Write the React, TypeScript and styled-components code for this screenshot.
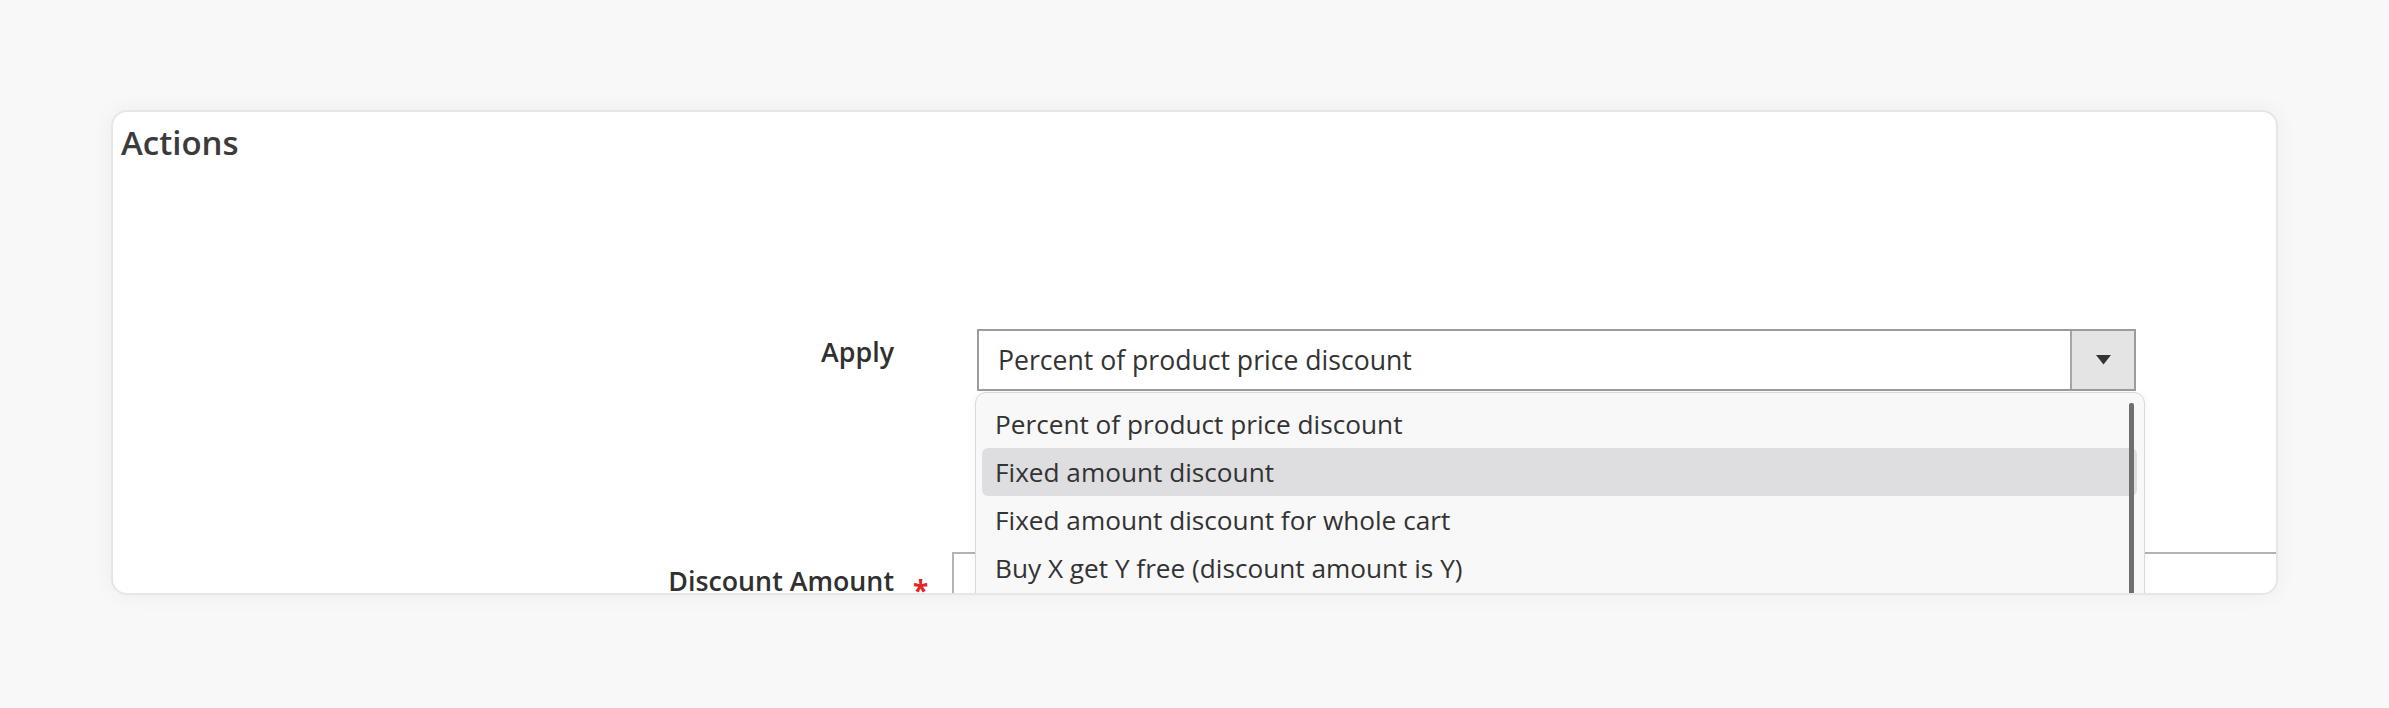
import React from "react";
import styled, { createGlobalStyle } from "styled-components";

const GlobalStyle = createGlobalStyle`
  html, body {
    margin: 0;
    padding: 0;
    background: #f8f8f8;
  }
  body {
    font-family: "Open Sans", "Noto Sans", sans-serif;
    color: #333333;
  }
`;

const Page = styled.div`
  width: 2389px;
  height: 708px;
  padding: 110px 0 0 111px;
  box-sizing: border-box;
`;

const Card = styled.section`
  position: relative;
  width: 2167px;
  height: 485px;
  box-sizing: border-box;
  background: #ffffff;
  border: 2px solid #e6e6e6;
  border-radius: 16px;
  box-shadow: 0 0 22px rgba(0, 0, 0, 0.05);
  overflow: hidden;
`;

const Title = styled.h2`
  margin: 0;
  padding: 13px 0 0 8px;
  font-size: 33px;
  line-height: 36px;
  font-weight: 600;
  color: #3b3b3b;
`;

const Form = styled.div`
  display: flex;
  flex-direction: column;
  padding-top: 168px;
`;

const Field = styled.div<{ $gap?: number }>`
  display: flex;
  align-items: flex-start;
  margin-top: ${(p) => p.$gap ?? 0}px;
`;

const Label = styled.label<{ $top: number }>`
  flex: 0 0 781px;
  padding-top: ${(p) => p.$top}px;
  text-align: right;
  font-size: 26.8px;
  line-height: 32px;
  font-weight: 600;
  color: #303030;
`;

const Marker = styled.span`
  flex: 0 0 58px;
  box-sizing: border-box;
  padding: 22px 0 0 19px;
  font-size: 28px;
  line-height: 32px;
  font-weight: 700;
  color: #e22626;
`;

const SelectWrap = styled.div`
  position: relative;
  margin-left: 83px;
`;

const SelectBox = styled.div`
  display: flex;
  width: 1159px;
  height: 62px;
  box-sizing: border-box;
  border: 2px solid #9c9c9c;
  background: #ffffff;
`;

const SelectValue = styled.span`
  flex: 1;
  padding-left: 19px;
  font-size: 26.6px;
  line-height: 58px;
  color: #333333;
  white-space: nowrap;
`;

const ArrowButton = styled.span`
  flex: 0 0 62px;
  display: flex;
  align-items: center;
  justify-content: center;
  background: #e4e4e4;
  border-left: 2px solid #a6a6a6;
`;

const Dropdown = styled.ul`
  position: absolute;
  top: 63px;
  left: -2px;
  width: 1170px;
  height: 260px;
  margin: 0;
  padding: 7px 7px 0 6px;
  box-sizing: border-box;
  list-style: none;
  background: #f8f8f8;
  border: 1px solid #d9d9d9;
  border-radius: 11px;
  box-shadow: 0 2px 8px rgba(0, 0, 0, 0.06);
`;

const Option = styled.li<{ $active?: boolean }>`
  height: 48px;
  padding-left: 13px;
  border-radius: 6px;
  font-size: 26.2px;
  line-height: 48px;
  color: #333333;
  white-space: nowrap;
  background: ${(p) => (p.$active ? "#dedde0" : "transparent")};
`;

const ScrollThumb = styled.span`
  position: absolute;
  top: 10px;
  right: 10px;
  width: 5px;
  height: 240px;
  border-radius: 2px;
  background: #6f6f6f;
`;

const Input = styled.div`
  flex: 1;
  height: 80px;
  box-sizing: border-box;
  border: 2px solid #b3b3b3;
  border-right: none;
  background: #ffffff;
`;

const options = [
  "Percent of product price discount",
  "Fixed amount discount",
  "Fixed amount discount for whole cart",
  "Buy X get Y free (discount amount is Y)",
];

export default function App() {
  return (
    <>
      <GlobalStyle />
      <Page>
        <Card>
          <Title>Actions</Title>
          <Form>
            <Field>
              <Label $top={7}>Apply</Label>
              <SelectWrap>
                <SelectBox>
                  <SelectValue>Percent of product price discount</SelectValue>
                  <ArrowButton>
                    <svg width="15" height="10" viewBox="0 0 15 10">
                      <path d="M0 0 H15 L7.5 9.5 Z" fill="#333333" />
                    </svg>
                  </ArrowButton>
                </SelectBox>
                <Dropdown>
                  {options.map((o, i) => (
                    <Option key={o} $active={i === 1}>
                      {o}
                    </Option>
                  ))}
                  <ScrollThumb />
                </Dropdown>
              </SelectWrap>
            </Field>
            <Field $gap={161}>
              <Label $top={13}>Discount Amount</Label>
              <Marker>*</Marker>
              <Input />
            </Field>
          </Form>
        </Card>
      </Page>
    </>
  );
}
